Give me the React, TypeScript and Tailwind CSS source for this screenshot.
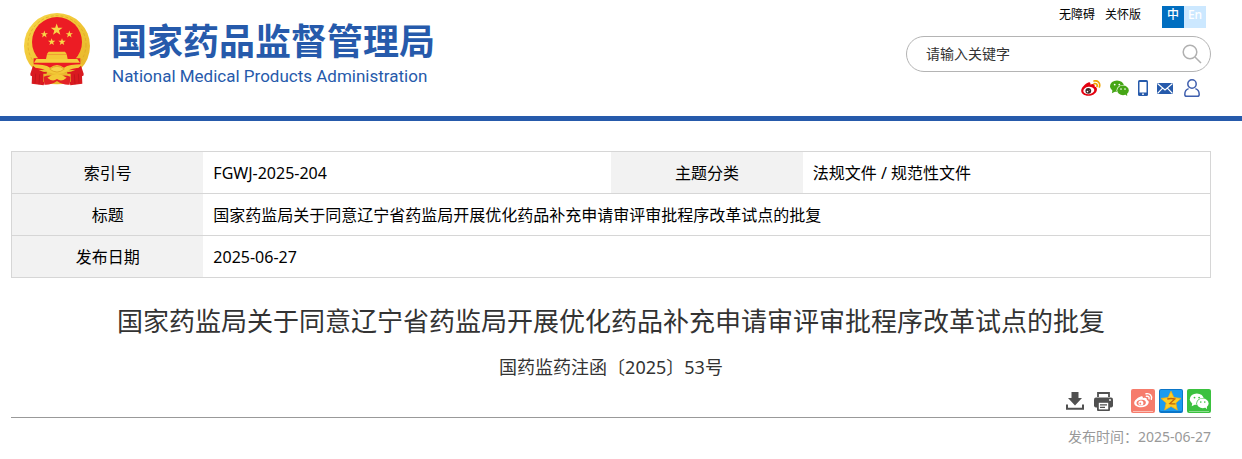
import React from 'react'

type IconProps = {
  className?: string
}

type Row = {
  label: string
  value: string
}[]

const rows: Row[] = [
  [
    { label: '索引号', value: 'FGWJ-2025-204' },
    { label: '主题分类', value: '法规文件 / 规范性文件' },
  ],
  [{ label: '标题', value: '国家药监局关于同意辽宁省药监局开展优化药品补充申请审评审批程序改革试点的批复' }],
  [{ label: '发布日期', value: '2025-06-27' }],
]

const STAR = 'M0 -10 L2.4 -3.1 L9.5 -3.1 L3.8 1.2 L5.9 8.1 L0 4 L-5.9 8.1 L-3.8 1.2 L-9.5 -3.1 L-2.4 -3.1 Z'

function Emblem({ className }: IconProps) {
  return (
    <svg viewBox="27 14 198 219" className={className} aria-hidden="true">
      <defs>
        <linearGradient id="gold" x1="0" y1="0" x2="1" y2="1">
          <stop offset="0" stopColor="#f6d84c" />
          <stop offset="0.5" stopColor="#f0c534" />
          <stop offset="1" stopColor="#e6b42a" />
        </linearGradient>
      </defs>
      <circle cx="126" cy="113" r="99" fill="url(#gold)" />
      <circle cx="126" cy="109" r="87" fill="none" stroke="#dda426" strokeWidth="2" strokeDasharray="9 6" />
      <circle cx="126" cy="101" r="75" fill="#ec1c24" />
      <path d="M56 150 H196 V185 H56 Z" fill="#ec1c24" />
      <g fill="#f8d748">
        <path d={STAR} transform="translate(125 64) scale(1.85)" />
        <path d={STAR} transform="translate(88 78) scale(1.15)" />
        <path d={STAR} transform="translate(163 78) scale(1.15)" />
        <path d={STAR} transform="translate(110 101) scale(1.15)" />
        <path d={STAR} transform="translate(141 101) scale(1.15)" />
      </g>
      <path d="M101 130 H150 L155 137 H96 Z M96 138 H155 L158 152 H93 Z" fill="#f3c937" />
      <path d="M64 152 H187 L195 163 H57 Z" fill="#f5cf3d" />
      <path d="M50 168 Q90 168 105 178 Q126 162 147 178 Q162 168 202 168 L198 178 Q170 178 154 190 Q126 205 98 190 Q82 178 54 178 Z" fill="#f3c937" />
      <path d="M54 172 Q72 190 96 192 L86 231 L50 226 L51 204 Q44 202 46 196 Z" fill="#d91a20" />
      <path d="M198 172 Q180 190 156 192 L166 231 L202 226 L201 204 Q208 202 206 196 Z" fill="#d91a20" />
      <path d="M85 196 H167 V220 Q126 236 85 220 Z" fill="#eab92e" />
      <path d="M86 205 Q106 197 126 207 Q146 197 166 205 L164 229 Q145 231 126 218 Q107 231 88 229 Z" fill="#e32226" />
      <path d="M97 208 Q126 186 155 208 Q140 222 126 212 Q112 222 97 208 Z" fill="#f3c937" />
      <path d="M104 182 Q126 166 148 182 Q126 200 104 182 Z" fill="#f6d34a" stroke="#d9981d" strokeWidth="2" />
      <path d="M62 196 L60 224 M74 198 L72 228 M190 196 L192 224 M178 198 L180 228" stroke="#b8121a" strokeWidth="2" />
    </svg>
  )
}

function WeiboIcon({ className }: IconProps) {
  return (
    <svg viewBox="0 0 20 16" className={className} aria-hidden="true">
      <path d="M7.4 2.5 C9 1.9 9.8 2.9 9.3 4.6 C12 3.5 14.2 4 13.6 6.6 C15.6 7.2 16.4 8.6 15.8 10.4 C14.9 13.6 11.2 15.8 7.2 15.8 C3.2 15.8 0.2 13.6 0.2 10.8 C0.2 7.7 4.3 3.6 7.4 2.5 Z" fill="#e3000f" />
      <ellipse cx="7.8" cy="10.5" rx="5.5" ry="3.7" fill="#fff" transform="rotate(-7 7.8 10.5)" />
      <circle cx="7.3" cy="10.8" r="2.9" fill="#3d2a2a" />
      <circle cx="6.5" cy="11.6" r="0.8" fill="#fff" />
      <circle cx="8.2" cy="10.3" r="0.4" fill="#fff" />
      <path d="M13 1 C17 0 19.6 3.2 18.4 7 M13.2 3.6 C15.4 3.1 16.6 4.6 16 6.4" fill="none" stroke="#f0a500" strokeWidth="1.7" strokeLinecap="round" />
    </svg>
  )
}

function WeiboShareIcon({ className }: IconProps) {
  return (
    <svg viewBox="0 0 24 24" className={className} aria-hidden="true">
      <rect width="24" height="24" rx="2" fill="#f67c6c" />
      <path d="M2 22.5 H22" stroke="#fbc0b8" strokeWidth="1" />
      <path d="M9.7 7.5 C11.4 6.8 12.3 7.6 11.8 9.2 C14.2 8.3 16.4 8.8 15.8 11 C17.6 11.6 18.1 12.8 17.5 14.2 C16.6 16.8 13.5 18.3 10 18.3 C6.3 18.3 3.2 16.6 3.2 14 C3.2 11.5 6.8 8.4 9.7 7.5 Z" fill="#fff" />
      <ellipse cx="10.2" cy="13.8" rx="4.7" ry="3" fill="#f67c6c" transform="rotate(-7 10.2 13.8)" />
      <circle cx="9.9" cy="14" r="2.5" fill="#fff" />
      <circle cx="9.3" cy="14.5" r="0.9" fill="#f67c6c" />
      <path d="M15 4.8 C19 4 21.4 6.8 20.3 10.3 M15.4 7.3 C17.5 6.9 18.5 8.2 18 9.8" fill="none" stroke="#fff" strokeWidth="1.4" strokeLinecap="round" />
    </svg>
  )
}

// two overlapping chat bubbles; `fg` is the bubble, `bg` the eyes and outline
function WechatBubbles({ fg, bg }: { fg: string; bg: string }) {
  return (
    <>
      <path d="M2.5 10 L1.9 13.2 L5.4 11.4 Z" fill={fg} />
      <ellipse cx="7" cy="6.2" rx="7" ry="5.8" fill={fg} />
      <circle cx="4.7" cy="4.6" r="0.9" fill={bg} />
      <circle cx="9.3" cy="4.6" r="0.9" fill={bg} />
      <ellipse cx="13" cy="10.4" rx="6.5" ry="5.4" fill={bg} />
      <path d="M15 14 L17.2 16.2 L17 12.6 Z" fill={fg} />
      <ellipse cx="13" cy="10.4" rx="5.8" ry="4.8" fill={fg} />
      <circle cx="11" cy="9.1" r="0.8" fill={bg} />
      <circle cx="15" cy="9.1" r="0.8" fill={bg} />
    </>
  )
}

function WechatIcon({ className }: IconProps) {
  return (
    <svg viewBox="0 0 19 16" className={className} aria-hidden="true">
      <WechatBubbles fg="#46a616" bg="#fff" />
    </svg>
  )
}

function WechatShareIcon({ className }: IconProps) {
  return (
    <svg viewBox="0 0 24 24" className={className} aria-hidden="true">
      <rect width="24" height="24" rx="2" fill="#3bc13f" />
      <path d="M2 22.5 H22" stroke="#8fdc91" strokeWidth="1" />
      <g transform="translate(2.8 4)">
        <WechatBubbles fg="#fff" bg="#3bc13f" />
      </g>
    </svg>
  )
}

function QzoneIcon({ className }: IconProps) {
  return (
    <svg viewBox="0 0 24 24" className={className} aria-hidden="true">
      <rect width="24" height="24" rx="2" fill="#0b76c8" />
      <rect x="1" y="1" width="22" height="21" rx="1" fill="#1b9bf0" />
      <path d="M12 2.2 L14.9 8.6 L22 9.4 L16.8 14 L18.3 21 L12 17.4 L5.7 21 L7.2 14 L2 9.4 L9.1 8.6 Z" fill="#fdcf26" stroke="#f5ae14" strokeWidth="0.8" strokeLinejoin="round" />
      <path d="M8.3 10 Q12 9 15.8 10 L10.8 14.6 Q13.5 15.2 16.4 14.8" fill="none" stroke="#c2650a" strokeWidth="1.3" />
    </svg>
  )
}

function PhoneIcon({ className }: IconProps) {
  return (
    <svg viewBox="0 0 10 16" className={className} aria-hidden="true">
      <rect width="10" height="16" rx="1.5" fill="#265aab" />
      <rect x="1.5" y="2" width="7" height="10.5" fill="#fff" />
      <circle cx="5" cy="14.2" r="0.9" fill="#fff" />
    </svg>
  )
}

function MailIcon({ className }: IconProps) {
  return (
    <svg viewBox="0 0 16 11" className={className} aria-hidden="true">
      <rect width="16" height="11" fill="#265aab" />
      <path d="M0.5 0.5 L8 7 L15.5 0.5 M0.5 10.5 L5.6 5.2 M15.5 10.5 L10.4 5.2" fill="none" stroke="#fff" strokeWidth="1.1" />
    </svg>
  )
}

function UserIcon({ className }: IconProps) {
  return (
    <svg viewBox="0 0 16 18" className={className} fill="none" stroke="#3f5fae" strokeWidth="1.5" aria-hidden="true">
      <circle cx="8" cy="5" r="4.2" />
      <path d="M4.6 9.6 C2.2 10.4 0.8 12.4 0.8 15.4 Q0.8 17.2 2.6 17.2 H13.4 Q15.2 17.2 15.2 15.4 C15.2 12.4 13.8 10.4 11.4 9.6" />
    </svg>
  )
}

function SearchIcon({ className }: IconProps) {
  return (
    <svg viewBox="0 0 20 20" className={className} fill="none" stroke="#b0b0b0" strokeWidth="1.5" aria-hidden="true">
      <circle cx="8" cy="8" r="6.8" />
      <path d="M13 13 L19 19" />
    </svg>
  )
}

function DownloadIcon({ className }: IconProps) {
  return (
    <svg viewBox="0 0 18 18" className={className} aria-hidden="true">
      <path d="M5.5 0 H12.5 V6 H16 L9 13.5 L2 6 H5.5 Z" fill="#505050" />
      <path d="M1 12.5 V16.8 H17 V12.5" fill="none" stroke="#505050" strokeWidth="2" />
    </svg>
  )
}

function PrintIcon({ className }: IconProps) {
  return (
    <svg viewBox="0 0 19 19" className={className} aria-hidden="true">
      <path d="M4 5 V1 H15 V5" fill="none" stroke="#505050" strokeWidth="1.8" />
      <rect y="5.4" width="19" height="10" rx="2" fill="#505050" />
      <rect x="3" y="9.4" width="13" height="9.6" rx="1" fill="#505050" />
      <rect x="4.8" y="10.8" width="9.4" height="6.6" fill="#fff" />
      <path d="M6 12.8 H13 M6 15.4 H11" stroke="#505050" strokeWidth="1.3" />
      <circle cx="16" cy="8" r="0.9" fill="#fff" />
    </svg>
  )
}

function Header() {
  return (
    <header className="flex h-[121px] items-start justify-between border-b-5 border-[#265aab] pr-[31px] pl-6">
      <a href="#" className="mt-[13px] flex gap-[21px] text-[#265aab]">
        <Emblem className="h-[73px] w-[66px] shrink-0" />
        <span className="flex flex-col whitespace-nowrap">
          <span className="mt-2 text-[36px] leading-[42px] font-bold">国家药品监督管理局</span>
          <span className="mt-px pl-px font-[Roboto,sans-serif] text-[17px] leading-6">National Medical Products Administration</span>
        </span>
      </a>

      <div className="flex w-[305px] flex-col">
        <div className="flex items-center justify-end pt-1.5 pr-[5px] text-xs text-black">
          <a href="#" className="mr-[10px] -mt-1">无障碍</a>
          <a href="#" className="mr-[21px] -mt-1">关怀版</a>
          <a href="#" className="flex h-[22px] w-[22px] items-center justify-center bg-[#006ec0] pb-1 font-medium text-white">中</a>
          <a href="#" className="flex h-[22px] w-[22px] items-center justify-center bg-[#cce8ff] pb-1 font-medium text-white">En</a>
        </div>

        <form className="mt-2 flex h-9 items-center rounded-full border border-[#b4b4b4] pr-2 pl-[19px]">
          <input
            type="text"
            aria-label="请输入关键字"
            placeholder="请输入关键字"
            className="min-w-0 flex-1 text-sm text-[#333] outline-none placeholder:text-[#333]"
          />
          <button type="button" aria-label="搜索">
            <SearchIcon className="h-5 w-5" />
          </button>
        </form>

        <nav className="mt-[7px] flex items-center justify-end gap-[9px] pr-[11px]">
          <a href="#" aria-label="微博"><WeiboIcon className="h-4 w-5" /></a>
          <a href="#" aria-label="微信"><WechatIcon className="h-4 w-[19px]" /></a>
          <a href="#" aria-label="手机版"><PhoneIcon className="h-4 w-[10px]" /></a>
          <a href="#" aria-label="邮箱"><MailIcon className="h-[11px] w-4" /></a>
          <a href="#" aria-label="个人中心" className="ml-0.5"><UserIcon className="h-[18px] w-4" /></a>
        </nav>
      </div>
    </header>
  )
}

function InfoTable() {
  return (
    <table className="mt-[30px] w-full table-fixed border-collapse border border-[#d6d6d6] text-base text-black">
      <colgroup>
        <col className="w-[16%]" />
        <col className="w-[34%]" />
        <col className="w-[16%]" />
        <col className="w-[34%]" />
      </colgroup>
      <tbody>
        {rows.map((row, index) => (
          <tr key={index} className="h-[42px] border-b border-[#d6d6d6]">
            {row.map(cell => (
              <React.Fragment key={cell.label}>
                <th scope="row" className="bg-[#f2f2f2] text-center font-normal">{cell.label}</th>
                <td colSpan={row.length === 1 ? 3 : 1} className="px-[10px]">{cell.value}</td>
              </React.Fragment>
            ))}
          </tr>
        ))}
      </tbody>
    </table>
  )
}

export default function App() {
  return (
    <div className="bg-white font-['Noto_Sans','Noto_Sans_CJK_SC',sans-serif]">
      <Header />
      <main className="pr-[31px] pl-[11px]">
        <InfoTable />

        <h1 className="mt-[22px] text-center text-[26px] leading-[42px] text-[#333]">
          国家药监局关于同意辽宁省药监局开展优化药品补充申请审评审批程序改革试点的批复
        </h1>
        <p className="mt-[10px] text-center text-lg leading-[30px] text-[#333]">国药监药注函〔2025〕53号</p>

        <div className="mt-[7px] flex items-center justify-end border-b border-[#999] pb-1">
          <button type="button" aria-label="下载" className="mr-[10px]"><DownloadIcon className="h-[18px] w-[18px]" /></button>
          <button type="button" aria-label="打印" className="mr-[18px]"><PrintIcon className="h-[19px] w-[19px]" /></button>
          <div className="flex gap-1">
            <a href="#" aria-label="分享到微博"><WeiboShareIcon className="h-6 w-6" /></a>
            <a href="#" aria-label="分享到QQ空间"><QzoneIcon className="h-6 w-6" /></a>
            <a href="#" aria-label="分享到微信"><WechatShareIcon className="h-6 w-6" /></a>
          </div>
        </div>
        <p className="mt-[7px] text-right text-sm leading-6 text-[#999]">发布时间：2025-06-27</p>
      </main>
    </div>
  )
}
